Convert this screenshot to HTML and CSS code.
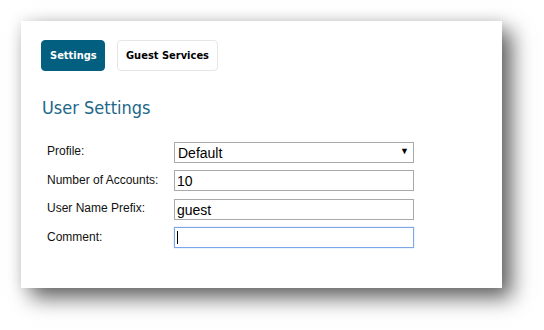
FILE: index.html
```html
<!DOCTYPE html>
<html lang="en">
  <head>
    <meta charset="UTF-8" />
    <meta name="viewport" content="width=device-width, initial-scale=1" />
    <title>User Settings</title>
    <link rel="stylesheet" href="styles.css">
  </head>
  <body>
    <div id="panel">
      <div class="tabs">
        <button class="tab tab-active">Settings</button>
        <button class="tab">Guest Services</button>
      </div>

      <h2 class="panel-title">User Settings</h2>

      <form class="settings-form">
        <label for="profile">Profile:</label>
        <div class="select-wrap">
          <select id="profile">
            <option>Default</option>
          </select>
          <span class="select-arrow">&#9660;</span>
        </div>

        <label for="count">Number of Accounts:</label>
        <input id="count" type="text" value="10" />

        <label for="prefix">User Name Prefix:</label>
        <input id="prefix" type="text" value="guest" />

        <label for="comment">Comment:</label>
        <div class="field-wrap">
          <input id="comment" class="field-active" type="text" value="" />
          <span class="caret"></span>
        </div>
      </form>
    </div>
  </body>
</html>
```

FILE: styles.css
```css
html {
  height: 100%;
}

body {
  box-sizing: border-box;
  min-height: 100%;
  margin: 0;
  padding: 21px 0 42px 21px;
  background-color: white;
  font-family: "Liberation Sans", Arial, sans-serif;
}

#panel {
  box-sizing: border-box;
  width: 481px;
  height: 267px;
  padding: 19px 20px 0 20px;
  background: white;
  box-shadow: 10px 10px 20px rgba(0, 0, 0, 0.6), 0 0 14px rgba(0, 0, 0, 0.1);
}

.tabs {
  display: flex;
  gap: 12px;
}

.tab {
  box-sizing: border-box;
  height: 31px;
  padding: 0 8px;
  font-family: "DejaVu Sans Condensed", "Liberation Sans", sans-serif;
  font-weight: bold;
  font-size: 11px;
  border-radius: 4px;
  border: 1px solid #e6e6e6;
  background-color: white;
  color: #000;
  cursor: pointer;
}

.tab-active {
  width: 64px;
  background-color: #035f7f;
  border-color: #035f7f;
  color: white;
}

.panel-title {
  margin: 26px 0 0 1px;
  font-family: "DejaVu Sans Condensed", "Liberation Sans", sans-serif;
  font-weight: normal;
  font-size: 18px;
  line-height: 22px;
  color: #226789;
}

.settings-form {
  display: grid;
  grid-template-columns: 127px 240px;
  grid-auto-rows: 20px;
  row-gap: 8.67px;
  margin: 23px 0 0 6px;
  align-items: center;
}

.settings-form label {
  font-size: 12px;
  color: #111;
  margin-top: -2px;
}

.settings-form input,
.settings-form select {
  box-sizing: border-box;
  width: 240px;
  height: 21px;
  margin: 0;
  padding: 1px 3px 0 2px;
  font-family: "Liberation Sans", Arial, sans-serif;
  font-size: 14px;
  color: #000;
  border: 1px solid #a9a9a9;
  border-radius: 0;
  background: white;
  outline: none;
}

.settings-form select {
  appearance: none;
  -webkit-appearance: none;
  padding-left: 3px;
}

.select-wrap,
.field-wrap {
  position: relative;
  height: 21px;
}

.select-arrow {
  position: absolute;
  right: 5px;
  top: 4px;
  font-size: 9px;
  color: #000;
  pointer-events: none;
}

.settings-form .field-active {
  border: 1px solid #7ea6e6;
  box-shadow: 0 0 1px #9bbcf0;
}

.caret {
  position: absolute;
  left: 3px;
  top: 4px;
  width: 1px;
  height: 13px;
  background: #000;
}
```
